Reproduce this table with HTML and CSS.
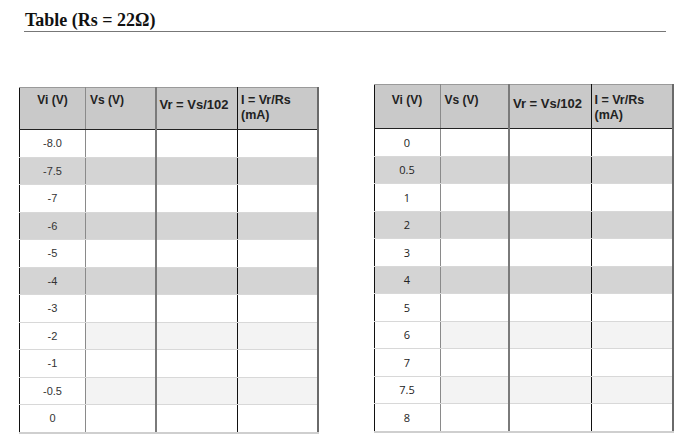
FILE: index.html
```html
<!DOCTYPE html>
<html>
<head>
<meta charset="utf-8">
<link rel="stylesheet" href="styles.css">
</head>
<body>
<div class="page">
  <h1 class="title">Table (Rs = 22Ω)</h1>
  <div class="tables">
    <table class="grid grid-left">
      <colgroup><col class="c1"><col class="c2"><col class="c3"><col class="c4"></colgroup>
      <thead>
        <tr><th class="h-vi">Vi (V)</th><th class="h-vs">Vs (V)</th><th class="h-vr">Vr = Vs/102</th><th class="h-i">I = Vr/Rs<br>(mA)</th></tr>
      </thead>
      <tbody>
        <tr class="w"><td>-8.0</td><td></td><td></td><td></td></tr>
        <tr class="g"><td>-7.5</td><td></td><td></td><td></td></tr>
        <tr class="w"><td>-7</td><td></td><td></td><td></td></tr>
        <tr class="g"><td>-6</td><td></td><td></td><td></td></tr>
        <tr class="w"><td>-5</td><td></td><td></td><td></td></tr>
        <tr class="g"><td>-4</td><td></td><td></td><td></td></tr>
        <tr class="w"><td>-3</td><td></td><td></td><td></td></tr>
        <tr class="l"><td>-2</td><td></td><td></td><td></td></tr>
        <tr class="w"><td>-1</td><td></td><td></td><td></td></tr>
        <tr class="l"><td>-0.5</td><td></td><td></td><td></td></tr>
        <tr class="w"><td>0</td><td></td><td></td><td></td></tr>
      </tbody>
    </table>
    <table class="grid grid-right">
      <colgroup><col class="c1"><col class="c2"><col class="c3"><col class="c4"></colgroup>
      <thead>
        <tr><th class="h-vi">Vi (V)</th><th class="h-vs">Vs (V)</th><th class="h-vr">Vr = Vs/102</th><th class="h-i">I = Vr/Rs<br>(mA)</th></tr>
      </thead>
      <tbody>
        <tr class="w"><td>0</td><td></td><td></td><td></td></tr>
        <tr class="g"><td>0.5</td><td></td><td></td><td></td></tr>
        <tr class="w"><td>1</td><td></td><td></td><td></td></tr>
        <tr class="g"><td>2</td><td></td><td></td><td></td></tr>
        <tr class="w"><td>3</td><td></td><td></td><td></td></tr>
        <tr class="g"><td>4</td><td></td><td></td><td></td></tr>
        <tr class="w"><td>5</td><td></td><td></td><td></td></tr>
        <tr class="l"><td>6</td><td></td><td></td><td></td></tr>
        <tr class="w"><td>7</td><td></td><td></td><td></td></tr>
        <tr class="l"><td>7.5</td><td></td><td></td><td></td></tr>
        <tr class="w"><td>8</td><td></td><td></td><td></td></tr>
      </tbody>
    </table>
  </div>
</div>
</body>
</html>
```
FILE: styles.css
```css
html, body {
  margin: 0;
  padding: 0;
  background: #ffffff;
}
.page {
  width: 690px;
  height: 442px;
  overflow: hidden;
}
.title {
  margin: 0 24px 0 24px;
  padding: 10px 0 1px 1px;
  font-family: "Liberation Serif", "DejaVu Serif", serif;
  font-weight: bold;
  font-size: 18px;
  line-height: 20px;
  color: #111;
  border-bottom: 1px solid #777;
}
.tables {
  display: flex;
  align-items: flex-start;
  padding-left: 19px;
  margin-top: 52px;
}
.grid {
  border-collapse: collapse;
  table-layout: fixed;
  font-family: "Liberation Sans", Arial, sans-serif;
  color: #333;
}
.grid-left {
  width: 298px;
  margin-top: 3px;
}
.grid-right {
  width: 299px;
  margin-left: 55px;
}
.grid-left .c1 { width: 66px; }
.grid-left .c2 { width: 70px; }
.grid-left .c3 { width: 82px; }
.grid-left .c4 { width: 80px; }
.grid-right .c1 { width: 66px; }
.grid-right .c2 { width: 69px; }
.grid-right .c3 { width: 82px; }
.grid-right .c4 { width: 82px; }

.grid thead tr { height: 42px; }
.grid-right thead tr { height: 44px; }
.grid th {
  background: #c9c9c9;
  padding: 0;
  font-size: 12px;
  font-weight: bold;
  line-height: 15px;
  color: #222;
  text-align: left;
  vertical-align: top;
  border-top: 1px solid #9a9a9a;
  border-bottom: 1px solid #222;
}
.grid td {
  height: 26.5px;
  padding: 0;
  font-size: 11px;
  text-align: center;
  vertical-align: middle;
  border-bottom: 1px solid #d8d8d8;
}
.grid-right td {
  font-family: "Open Sans", "Liberation Sans", sans-serif;
  font-size: 11px;
  color: #222;
}
.grid tbody tr:last-child td { border-bottom: 2px solid #cfcfcf; }

.grid tr > :nth-child(1) { border-left: 1px solid #111; border-right: 1px solid #8a8a8a; }
.grid tr > :nth-child(2) { border-right: 2px solid #7a7a7a; }
.grid tr > :nth-child(3) { border-right: 1px solid #111; }
.grid tr > :nth-child(4) { border-right: 2px solid #6a6a6a; }

.grid .h-vi { text-align: center; padding-top: 5px; }
.grid .h-vs { padding: 5px 0 0 4px; }
.grid .h-vr { padding: 9px 0 0 3px; font-size: 13px; }
.grid .h-i { padding: 5px 0 0 3px; font-size: 12.5px; }
.grid-right .h-vi, .grid-right .h-vs, .grid-right .h-i { padding-top: 8px; }
.grid-right .h-vr { padding-top: 11px; }

tr.w td { background: #ffffff; }
tr.g td { background: #d4d4d4; }
tr.l td { background: #f3f3f3; }
tr.l td:first-child { background: #ffffff; }
```
